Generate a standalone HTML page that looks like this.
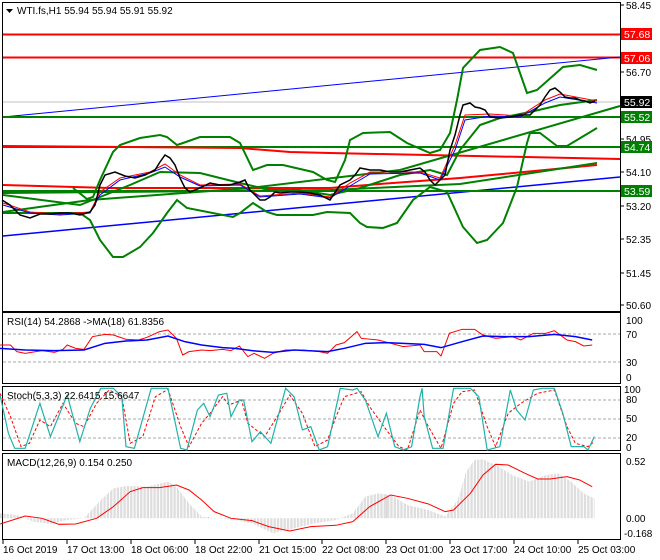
<!DOCTYPE html>
<html><head><meta charset="utf-8"><style>
body{margin:0;background:#fff;width:660px;height:560px;overflow:hidden}
svg{display:block;font-family:"Liberation Sans",sans-serif;font-size:10px}
</style></head><body>
<svg width="660" height="560" viewBox="0 0 660 560">
<defs>
<pattern id="hb" width="3.4" height="10" patternUnits="userSpaceOnUse"><rect x="0" y="0" width="1" height="10" fill="#b0b0b0"/></pattern>
</defs>
<rect width="660" height="560" fill="#fff"/>
<g fill="none" stroke="#000" stroke-width="1">
<rect x="2.5" y="2.5" width="618" height="309"/>
<rect x="2.5" y="312.5" width="618" height="71"/>
<rect x="2.5" y="386.5" width="618" height="64"/>
<rect x="2.5" y="453.5" width="618" height="86"/>
</g>
<g fill="none">
<line x1="3" y1="102" x2="620" y2="102" stroke="#c0c0c0"/>
<line x1="3" y1="34.5" x2="620" y2="34.5" stroke="#f00" stroke-width="2"/>
<line x1="3" y1="57.5" x2="620" y2="57.5" stroke="#f00" stroke-width="2"/>
<line x1="3" y1="117" x2="620" y2="57" stroke="#00f"/>
<line x1="3" y1="117" x2="620" y2="117" stroke="#008000" stroke-width="2"/>
<line x1="3" y1="147" x2="620" y2="147" stroke="#008000" stroke-width="2"/>
<polyline points="3,146 240,148 290,152 330,153 620,159" stroke="#f00" stroke-width="2"/>
<line x1="3" y1="236" x2="620" y2="177" stroke="#00f" stroke-width="1.5"/>
<line x1="3" y1="191" x2="620" y2="191" stroke="#008000" stroke-width="2"/>
<polyline points="3,185 110,188 330,188 380,184 460,178 597,165" stroke="#f00" stroke-width="2"/>
<polyline points="3,193 110,192 330,190 460,184 597,163" stroke="#008000" stroke-width="2"/>
<polyline points="3,212 90,200 250,188 400,170 620,106" stroke="#008000" stroke-width="2"/>
<polyline points="73,188 87,199 93,197 100,180 113,152 120,145 140,138 160,135 167,137 177,145 183,143 200,137 230,137 240,143 253,170 267,165 283,165 313,172 327,180 335,182 345,160 350,140 363,133 390,132 407,143 430,153 440,150 450,133 457,100 463,68 480,50 500,47 513,53 527,93 537,90 563,67 580,65 597,70" stroke="#008000" stroke-width="2"/>
<polyline points="3,213 33,213 80,213 90,220 100,240 113,257 123,257 140,247 153,233 167,213 177,200 187,208 233,217 240,213 253,203 267,212 277,215 313,215 327,212 350,213 360,223 367,227 383,228 397,223 413,200 430,187 447,192 463,227 477,243 487,240 503,223 517,187 527,143 530,133 540,133 557,146 567,146 597,128" stroke="#008000" stroke-width="2"/>
<polyline points="3,195 80,205 100,197 130,185 160,172 200,173 240,183 270,190 300,190 330,195 360,188 400,175 430,170 447,175 460,150 480,125 500,118 530,112 560,105 597,100" stroke="#008000" stroke-width="2"/>
<polyline points="3,203 30,212 60,214 90,212 100,192 120,178 150,172 165,164 180,175 200,185 240,184 260,196 300,193 330,197 350,183 370,172 420,172 440,178 455,145 465,115 490,114 520,116 545,100 560,94 597,101" stroke="#f00" stroke-width="1"/>
<polyline points="3,205 30,213 60,215 90,213 100,195 120,180 150,173 165,167 180,177 200,186 240,185 260,197 300,194 330,198 350,186 370,174 420,173 440,180 455,150 465,120 490,116 520,117 545,103 560,97 597,103" stroke="#00f" stroke-width="1"/>
<polyline points="2,200 10,205 20,215 30,218 40,214 50,214 60,213 70,213 80,215 90,212 95,205 100,185 105,175 115,172 125,176 135,178 145,175 155,170 160,162 165,155 170,158 175,165 180,178 185,188 190,192 200,188 210,183 220,185 230,185 240,182 245,180 250,190 255,195 260,200 265,200 270,197 275,192 280,193 290,192 300,192 310,193 320,195 330,200 340,185 350,180 355,175 360,168 370,170 380,170 390,172 400,172 410,170 420,168 425,172 430,180 435,185 440,180 445,175 450,150 455,135 460,115 463,105 470,103 475,107 480,108 485,110 490,117 500,118 510,117 520,115 530,115 535,110 540,105 545,97 550,90 555,88 560,92 565,97 570,98 575,98 580,100 585,101 590,103 595,101" stroke="#000" stroke-width="1.5"/>
</g>
<text x="17" y="14" fill="#000">WTI.fs,H1  55.94 55.94 55.91 55.92</text>
<path d="M6,9 h7 l-3.5,4z" fill="#000"/>
<g fill="#000">
<text x="626" y="9">58.45</text><text x="626" y="76">56.70</text><text x="626" y="143">54.95</text><text x="626" y="176">54.10</text><text x="626" y="210">53.20</text><text x="626" y="243">52.35</text><text x="626" y="277">51.45</text><text x="626" y="309">50.60</text>
</g>
<g font-size="10.5">
<rect x="621" y="28" width="31" height="12" fill="#f00"/><text x="624" y="38" fill="#fff">57.68</text>
<rect x="621" y="52" width="31" height="12" fill="#f00"/><text x="624" y="62" fill="#fff">57.06</text>
<rect x="621" y="96" width="31" height="12" fill="#000"/><text x="624" y="106" fill="#fff">55.92</text>
<rect x="621" y="111" width="31" height="12" fill="#008000"/><text x="624" y="121" fill="#fff">55.52</text>
<rect x="621" y="141" width="31" height="12" fill="#008000"/><text x="624" y="151" fill="#fff">54.74</text>
<rect x="621" y="185" width="31" height="12" fill="#008000"/><text x="624" y="195" fill="#fff">53.59</text>
</g>
<g fill="none">
<line x1="3" y1="334" x2="620" y2="334" stroke="#aaa" stroke-dasharray="3,2"/>
<line x1="3" y1="362" x2="620" y2="362" stroke="#aaa" stroke-dasharray="3,2"/>
<g transform="translate(0,300) scale(0.42,0.3333)">
<polyline vector-effect="non-scaling-stroke" stroke="#f00" stroke-width="1" points="0,135 25,135 40,155 60,160 100,152 130,157 150,148 160,135 180,145 200,148 220,110 250,103 270,105 300,118 330,120 350,112 380,95 400,90 420,115 435,165 450,155 480,150 500,152 530,148 550,152 570,138 590,170 605,160 630,175 650,160 680,150 720,150 760,155 780,160 800,135 820,128 850,95 860,115 900,120 930,130 960,140 1000,135 1010,155 1040,155 1050,168 1070,100 1100,88 1130,88 1150,105 1180,115 1220,110 1240,120 1270,100 1300,100 1320,92 1350,120 1370,125 1390,138 1410,135"/>
<polyline vector-effect="non-scaling-stroke" stroke="#00f" stroke-width="1.5" points="0,145 60,150 130,152 200,150 250,130 300,123 350,120 400,108 440,125 480,135 530,143 560,145 600,152 650,157 700,150 780,155 820,145 870,130 920,128 960,130 1010,133 1050,143 1100,125 1150,108 1200,110 1260,110 1320,103 1370,110 1410,120"/>
</g>
</g>
<text x="7" y="325">RSI(14) 54.2868  -&gt;MA(18) 61.8356</text>
<g fill="#000"><text x="626" y="324">100</text><text x="626" y="338">70</text><text x="626" y="366">30</text><text x="626" y="381">0</text></g>
<g fill="none" stroke="#aaa" stroke-dasharray="3,2">
<line x1="3" y1="400" x2="620" y2="400"/><line x1="3" y1="419" x2="620" y2="419"/><line x1="3" y1="438" x2="620" y2="438"/>
</g>
<g fill="none" transform="translate(0,300) scale(0.42,0.3333)">
<polyline vector-effect="non-scaling-stroke" stroke="#f00" stroke-dasharray="3,2" points="0,280 25,350 50,440 70,430 95,360 120,380 150,310 180,370 200,380 230,310 260,270 290,290 310,430 340,410 370,290 400,268 430,380 450,440 480,370 500,340 530,290 545,315 575,300 590,370 630,410 660,350 690,285 720,340 750,440 780,420 800,350 820,290 860,275 880,320 920,390 950,440 970,450 1000,330 1020,380 1050,445 1080,310 1100,275 1130,270 1160,380 1180,440 1210,340 1240,310 1280,280 1320,270 1350,380 1370,430 1400,440 1415,425"/>
<polyline vector-effect="non-scaling-stroke" stroke="#20b2aa" stroke-width="1.2" points="0,285 20,400 35,445 60,445 95,310 120,410 160,285 190,425 215,325 240,265 270,265 290,290 300,440 320,445 360,265 400,265 430,445 445,450 470,330 485,310 500,350 520,285 540,280 550,350 570,300 580,300 600,425 620,395 645,430 680,265 700,290 720,390 740,380 760,450 780,440 810,265 840,270 850,265 870,300 900,410 920,340 940,440 960,450 980,440 1000,290 1005,265 1010,350 1030,445 1055,445 1080,265 1120,265 1140,290 1160,450 1190,440 1215,270 1230,330 1250,360 1270,270 1290,265 1320,265 1340,340 1360,440 1390,440 1400,450 1415,410"/>
</g>
<text x="7" y="399">Stoch(5,3,3) 22.6415 15.6647</text>
<g fill="#000"><text x="624" y="393">100</text><text x="626" y="403">80</text><text x="626" y="422">50</text><text x="626" y="441">20</text><text x="626" y="451">0</text></g>
<g transform="translate(0,300) scale(0.42,0.3333)">
<polygon fill="url(#hb)" points="0,655 0,640 40,645 80,665 120,672 160,660 200,655 240,600 270,565 300,558 350,560 400,545 420,560 450,610 480,650 520,655 560,660 600,670 650,700 700,685 750,670 800,660 840,640 870,590 900,580 930,585 970,615 1020,630 1060,650 1090,600 1110,515 1130,480 1150,478 1180,495 1220,525 1260,545 1300,525 1330,520 1360,545 1390,580 1415,595 1415,655"/>
<polyline fill="none" vector-effect="non-scaling-stroke" stroke="#f00" stroke-width="1" points="0,672 60,648 100,655 140,673 180,672 230,655 270,620 310,575 340,563 380,563 420,555 450,570 480,600 510,635 550,655 600,662 640,680 690,693 740,680 800,676 840,665 880,620 930,585 970,595 1020,612 1060,635 1080,630 1120,580 1150,525 1180,493 1210,495 1250,520 1280,537 1310,537 1350,530 1380,540 1410,560"/>
</g>
<text x="7" y="466">MACD(12,26,9) 0.154 0.250</text>
<g fill="#000"><text x="626" y="465">0.52</text><text x="626" y="522">0.00</text><text x="624" y="537">-0.168</text></g>
<g stroke="#000">
<line x1="620" y1="5" x2="624" y2="5"/><line x1="620" y1="72" x2="624" y2="72"/><line x1="620" y1="139" x2="624" y2="139"/><line x1="620" y1="172" x2="624" y2="172"/><line x1="620" y1="206" x2="624" y2="206"/><line x1="620" y1="239" x2="624" y2="239"/><line x1="620" y1="273" x2="624" y2="273"/><line x1="620" y1="305" x2="624" y2="305"/>
<line x1="3" y1="540" x2="3" y2="544"/><line x1="67" y1="540" x2="67" y2="544"/><line x1="131" y1="540" x2="131" y2="544"/><line x1="195" y1="540" x2="195" y2="544"/><line x1="259" y1="540" x2="259" y2="544"/><line x1="322" y1="540" x2="322" y2="544"/><line x1="386" y1="540" x2="386" y2="544"/><line x1="450" y1="540" x2="450" y2="544"/><line x1="514" y1="540" x2="514" y2="544"/><line x1="578" y1="540" x2="578" y2="544"/>
</g>
<g fill="#000">
<text x="3" y="553">16 Oct 2019</text><text x="67" y="553">17 Oct 13:00</text><text x="131" y="553">18 Oct 06:00</text><text x="195" y="553">18 Oct 22:00</text><text x="259" y="553">21 Oct 15:00</text><text x="322" y="553">22 Oct 08:00</text><text x="386" y="553">23 Oct 01:00</text><text x="450" y="553">23 Oct 17:00</text><text x="514" y="553">24 Oct 10:00</text><text x="578" y="553">25 Oct 03:00</text>
</g>
</svg>
</body></html>
